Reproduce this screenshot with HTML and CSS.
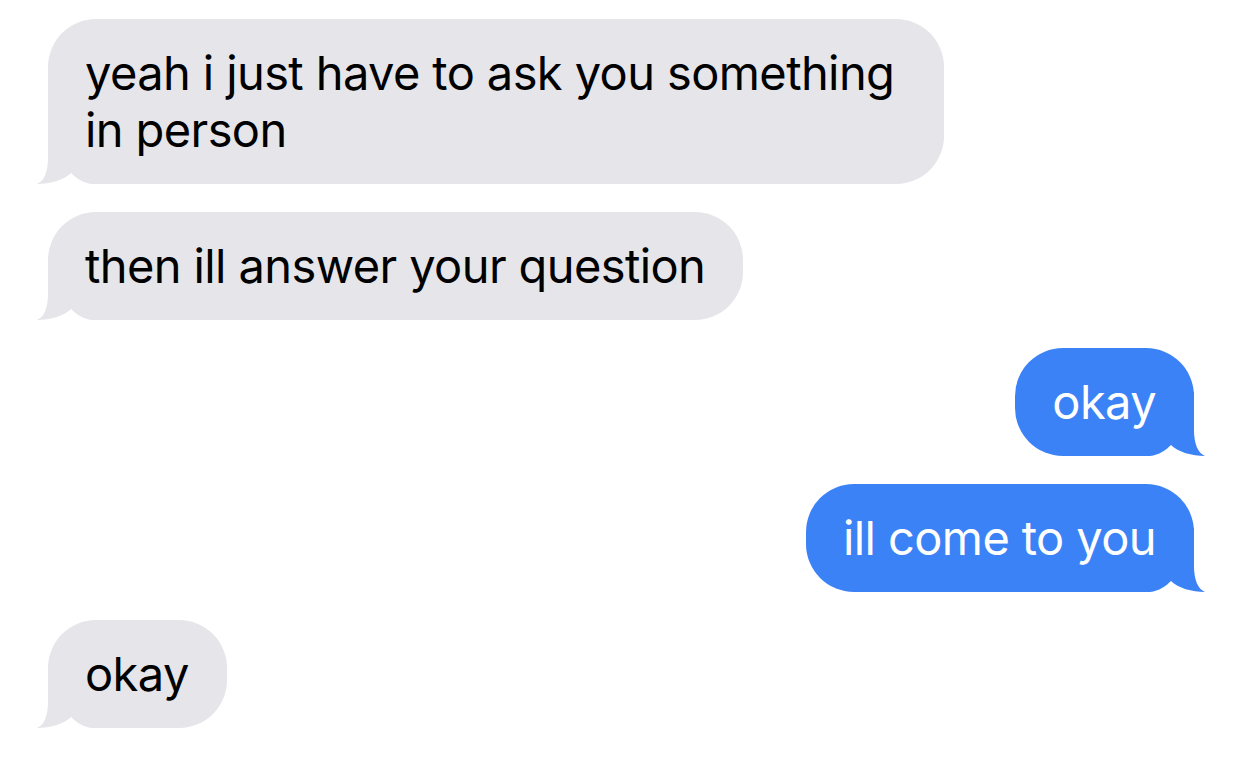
FILE: index.html
```html
<!DOCTYPE html>
<html lang="en">
  <head>
    <meta charset="UTF-8" />
    <meta name="viewport" content="width=device-width, initial-scale=1.0" />
    <title>Messages</title>
    <link rel="stylesheet" href="styles.css">
  </head>
  <body>
    <div class="thread">
      <div class="bubble received">
        <svg class="tail" viewBox="0 0 90 64" aria-hidden="true"><path d="M12 0 L12 38 C12 52 8 61 1 64 C14 64 28 60 35 53 C40 58 47 63 56 64 L90 64 L90 0 Z" /></svg>
        <span class="text">yeah i just have to ask you something in person</span>
      </div>

      <div class="bubble received">
        <svg class="tail" viewBox="0 0 90 64" aria-hidden="true"><path d="M12 0 L12 38 C12 52 8 61 1 64 C14 64 28 60 35 53 C40 58 47 63 56 64 L90 64 L90 0 Z" /></svg>
        <span class="text">then ill answer your question</span>
      </div>

      <div class="bubble sent">
        <svg class="tail" viewBox="0 0 90 64" aria-hidden="true"><path d="M12 0 L12 38 C12 52 8 61 1 64 C14 64 28 60 35 53 C40 58 47 63 56 64 L90 64 L90 0 Z" /></svg>
        <span class="text">okay</span>
      </div>

      <div class="bubble sent">
        <svg class="tail" viewBox="0 0 90 64" aria-hidden="true"><path d="M12 0 L12 38 C12 52 8 61 1 64 C14 64 28 60 35 53 C40 58 47 63 56 64 L90 64 L90 0 Z" /></svg>
        <span class="text">ill come to you</span>
      </div>

      <div class="bubble received">
        <svg class="tail" viewBox="0 0 90 64" aria-hidden="true"><path d="M12 0 L12 38 C12 52 8 61 1 64 C14 64 28 60 35 53 C40 58 47 63 56 64 L90 64 L90 0 Z" /></svg>
        <span class="text">okay</span>
      </div>
    </div>
  </body>
</html>
```

FILE: styles.css
```css
* {
  margin: 0;
  padding: 0;
  box-sizing: border-box;
}

body {
  font-family: "Inter", "Noto Sans", "Liberation Sans", sans-serif;
  background: white;
}

.thread {
  display: flex;
  flex-direction: column;
  gap: 28px;
  padding: 19px 48px;
}

.bubble {
  position: relative;
  max-width: 896px;
  padding: 25px 38px 26px 37px;
  border-radius: 48px;
  font-size: 47px;
  line-height: 57px;
  letter-spacing: -0.6px;
}

.bubble .text {
  position: relative;
  z-index: 1;
}

.bubble .tail {
  position: absolute;
  bottom: 0;
  width: 90px;
  height: 64px;
  z-index: 0;
}

.received {
  align-self: flex-start;
  background: #e5e5ea;
  color: #000;
  border-bottom-left-radius: 60px;
}

.received .tail {
  left: -12px;
  fill: #e5e5ea;
}

.sent {
  align-self: flex-end;
  background: #3b82f6;
  color: #fff;
  border-bottom-right-radius: 60px;
}

.sent .tail {
  right: -12px;
  fill: #3b82f6;
  transform: scaleX(-1);
}
```
